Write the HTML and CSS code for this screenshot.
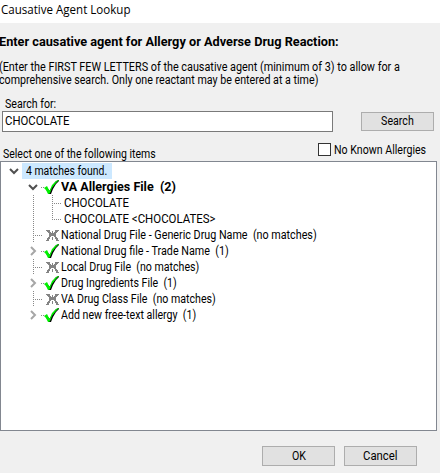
FILE: index.html
```html
<!DOCTYPE html>
<html lang="en">
<head>
<meta charset="utf-8">
<title>Causative Agent Lookup</title>
<link rel="stylesheet" href="styles.css">
</head>
<body>
<svg class="defs" aria-hidden="true">
  <symbol id="check" viewBox="0 0 16 16">
    <path d="M1 9h2l2 2h1l3-5 3-4 3-1v1l-3 3-3 5-2 5H5z" fill="#000"/>
    <path d="M0 9l3-2 2 4h1l2-5 3-3 3-2h1l-3 3-4 5-2 5-1 1H4L2 11z" fill="#00f000"/>
  </symbol>
  <symbol id="none" viewBox="0 0 16 16" shape-rendering="crispEdges">
    <path d="M2 3h4v1H2zM3 4h3v1H3zM4 5h3v1H4zM5 6h3v1H5zM11 3h4v1h-4zM11 4h3v1h-3zM10 5h3v1h-3zM9 6h3v1H9zM5 7h7v2H5zM5 9h2v1H5zM10 9h2v1h-2zM4 10h2v1H4zM11 10h2v1h-2zM3 11h3v1H3zM11 11h3v1h-3zM3 12h2v1H3zM12 12h2v1h-2zM2 13h3v1H2zM12 13h3v1h-3zM8 4h1v3H8zM8 10h1v3H8z" fill="#848484"/>
  </symbol>
  <symbol id="down" viewBox="0 0 10 10"><path d="M1 3l4 4 4-4" fill="none" stroke="#505050" stroke-width="2"/></symbol>
  <symbol id="right" viewBox="0 0 10 10"><path d="M3 1l4 4-4 4" fill="none" stroke="#a6a6a6" stroke-width="2"/></symbol>
</svg>
<header class="title"><span class="t t-title">Causative Agent Lookup</span></header>
<main class="dialog">
  <h1><span class="t t-head">Enter causative agent for Allergy or Adverse Drug Reaction:</span></h1>
  <p><span class="t t-p1">(Enter the FIRST FEW LETTERS of the causative agent (minimum of 3) to allow for a</span><br><span class="t t-p2">comprehensive search. Only one reactant may be entered at a time)</span></p>
  <div class="search-label"><span class="t">Search for:</span></div>
  <div class="search-row"><div class="input"><span class="t t-wide">CHOCOLATE</span></div><button><span class="t">Search</span></button></div>
  <div class="options"><span class="select-label t">Select one of the following items</span><label class="nka"><i class="box"></i><span class="t">No Known Allergies</span></label></div>
  <div class="tree">
    <div class="row root"><svg class="arrow"><use href="#down"/></svg><div class="selected"><span class="t t-root">4 matches found.</span></div></div>
    <div class="row"><svg class="arrow"><use href="#down"/></svg><i class="stub"></i><svg class="icon"><use href="#check"/></svg><b class="t t-bold">VA Allergies File&nbsp; (2)</b></div>
    <div class="row child"><i class="guide"></i><i class="branch"></i><span class="t t-choc">CHOCOLATE</span></div>
    <div class="row child"><i class="guide"></i><i class="branch end"></i><span class="t t-choc">CHOCOLATE &lt;CHOCOLATES&gt;</span></div>
    <div class="row none"><i class="branch"></i><svg class="icon"><use href="#none"/></svg><span class="t t-long">National Drug File - Generic Drug Name&nbsp; (no matches)</span></div>
    <div class="row"><svg class="arrow"><use href="#right"/></svg><i class="stub"></i><svg class="icon"><use href="#check"/></svg><span class="t t-long">National Drug file - Trade Name&nbsp; (1)</span></div>
    <div class="row none"><i class="branch"></i><svg class="icon"><use href="#none"/></svg><span class="t">Local Drug File&nbsp; (no matches)</span></div>
    <div class="row"><svg class="arrow"><use href="#right"/></svg><i class="stub"></i><svg class="icon"><use href="#check"/></svg><span class="t">Drug Ingredients File&nbsp; (1)</span></div>
    <div class="row none"><i class="branch"></i><svg class="icon"><use href="#none"/></svg><span class="t">VA Drug Class File&nbsp; (no matches)</span></div>
    <div class="row"><svg class="arrow"><use href="#right"/></svg><i class="stub"></i><svg class="icon"><use href="#check"/></svg><span class="t">Add new free-text allergy&nbsp; (1)</span></div>
  </div>
  <footer><button><span class="t">OK</span></button><button><span class="t t-wide">Cancel</span></button></footer>
</main>
</body>
</html>
```
FILE: styles.css
```css
* { box-sizing: border-box; }
body { margin: 0; width: 440px; height: 473px; overflow: hidden; background: #f0f0f0; color: #000; font: 12px/13px Roboto, sans-serif; white-space: nowrap; }
.defs { display: none; }
.t { display: inline-block; transform: scaleX(.885); transform-origin: 0 50%; }
.t-title { transform: scaleX(.963); }
.t-head { transform: scaleX(.979); }
.t-p1 { transform: scaleX(.902); }
.t-p2 { transform: scaleX(.89); }
.t-wide { transform: scaleX(.945); }
.t-choc { transform: scaleX(.952); }
.t-root { transform: scaleX(.87); }
.t-bold { transform: scaleX(1.045); }
.t-long { transform: scaleX(.896); }
.title { height: 23px; padding-left: 1px; background: #fff; font: 12px/20px "Open Sans", sans-serif; }
h1 { margin: 12px 0 0 -1px; font-size: 13px; line-height: 14px; }
p { margin: 12px 0 0 -1px; height: 26px; }
p .t { vertical-align: top; }
.search-label { margin: 11px 0 0 5px; height: 13px; }
.search-row { display: flex; justify-content: space-between; align-items: center; margin: 0 6px 0 2px; }
.input { width: 331px; height: 21px; border: 1px solid #7a7a7a; background: #fff; padding: 3px 2px; }
button { width: 73px; height: 19px; padding: 0; border: 1px solid #adadad; background: #e1e1e1; color: #000; font: inherit; }
button .t { transform-origin: 50% 50%; }
.options { display: flex; justify-content: space-between; height: 29px; padding-left: 3px; }
.select-label { padding-top: 16px; transform: scaleX(.875); }
.nka { display: flex; width: 122px; padding-top: 11px; }
.nka .t { padding-top: 1px; }
.box { width: 13px; height: 13px; border: 1px solid #333; background: #fff; margin-right: 3px; }
.tree { width: 437px; height: 270px; border: 1px solid #828790; background: #fff; padding-top: 1px; }
.row { display: flex; align-items: center; height: 16px; padding-left: 27px; line-height: 16px; }
.root { padding-left: 8px; }
.none { padding-left: 32px; }
.arrow { width: 10px; height: 10px; flex: none; }
.stub { width: 3px; height: 1px; margin: 0 0 0 3px; background: repeating-linear-gradient(90deg, #888 0 1px, transparent 1px 2px); }
.icon { width: 16px; height: 16px; flex: none; margin-right: 1px; }
.root .selected { width: 90px; height: 16px; margin-left: 3px; padding-left: 4px; background: #cce8ff; }
.branch { width: 10px; height: 16px; background: repeating-linear-gradient(90deg, #888 0 1px, transparent 1px 2px) 0 8px / 10px 1px no-repeat, repeating-linear-gradient(#888 0 1px, transparent 1px 2px) 0 0 / 1px 16px no-repeat; }
.none .icon { margin: 0 1px; }
.end { background-size: 10px 1px, 1px 8px; }
.child { padding-left: 32px; }
.child .branch { margin-right: 2px; }
.guide { width: 19px; height: 16px; background: repeating-linear-gradient(#888 0 1px, transparent 1px 2px) 0 0 / 1px 16px no-repeat; }
footer { display: flex; justify-content: flex-end; gap: 9px; padding: 15px 23px 0 0; }
footer button { height: 20px; }
```
